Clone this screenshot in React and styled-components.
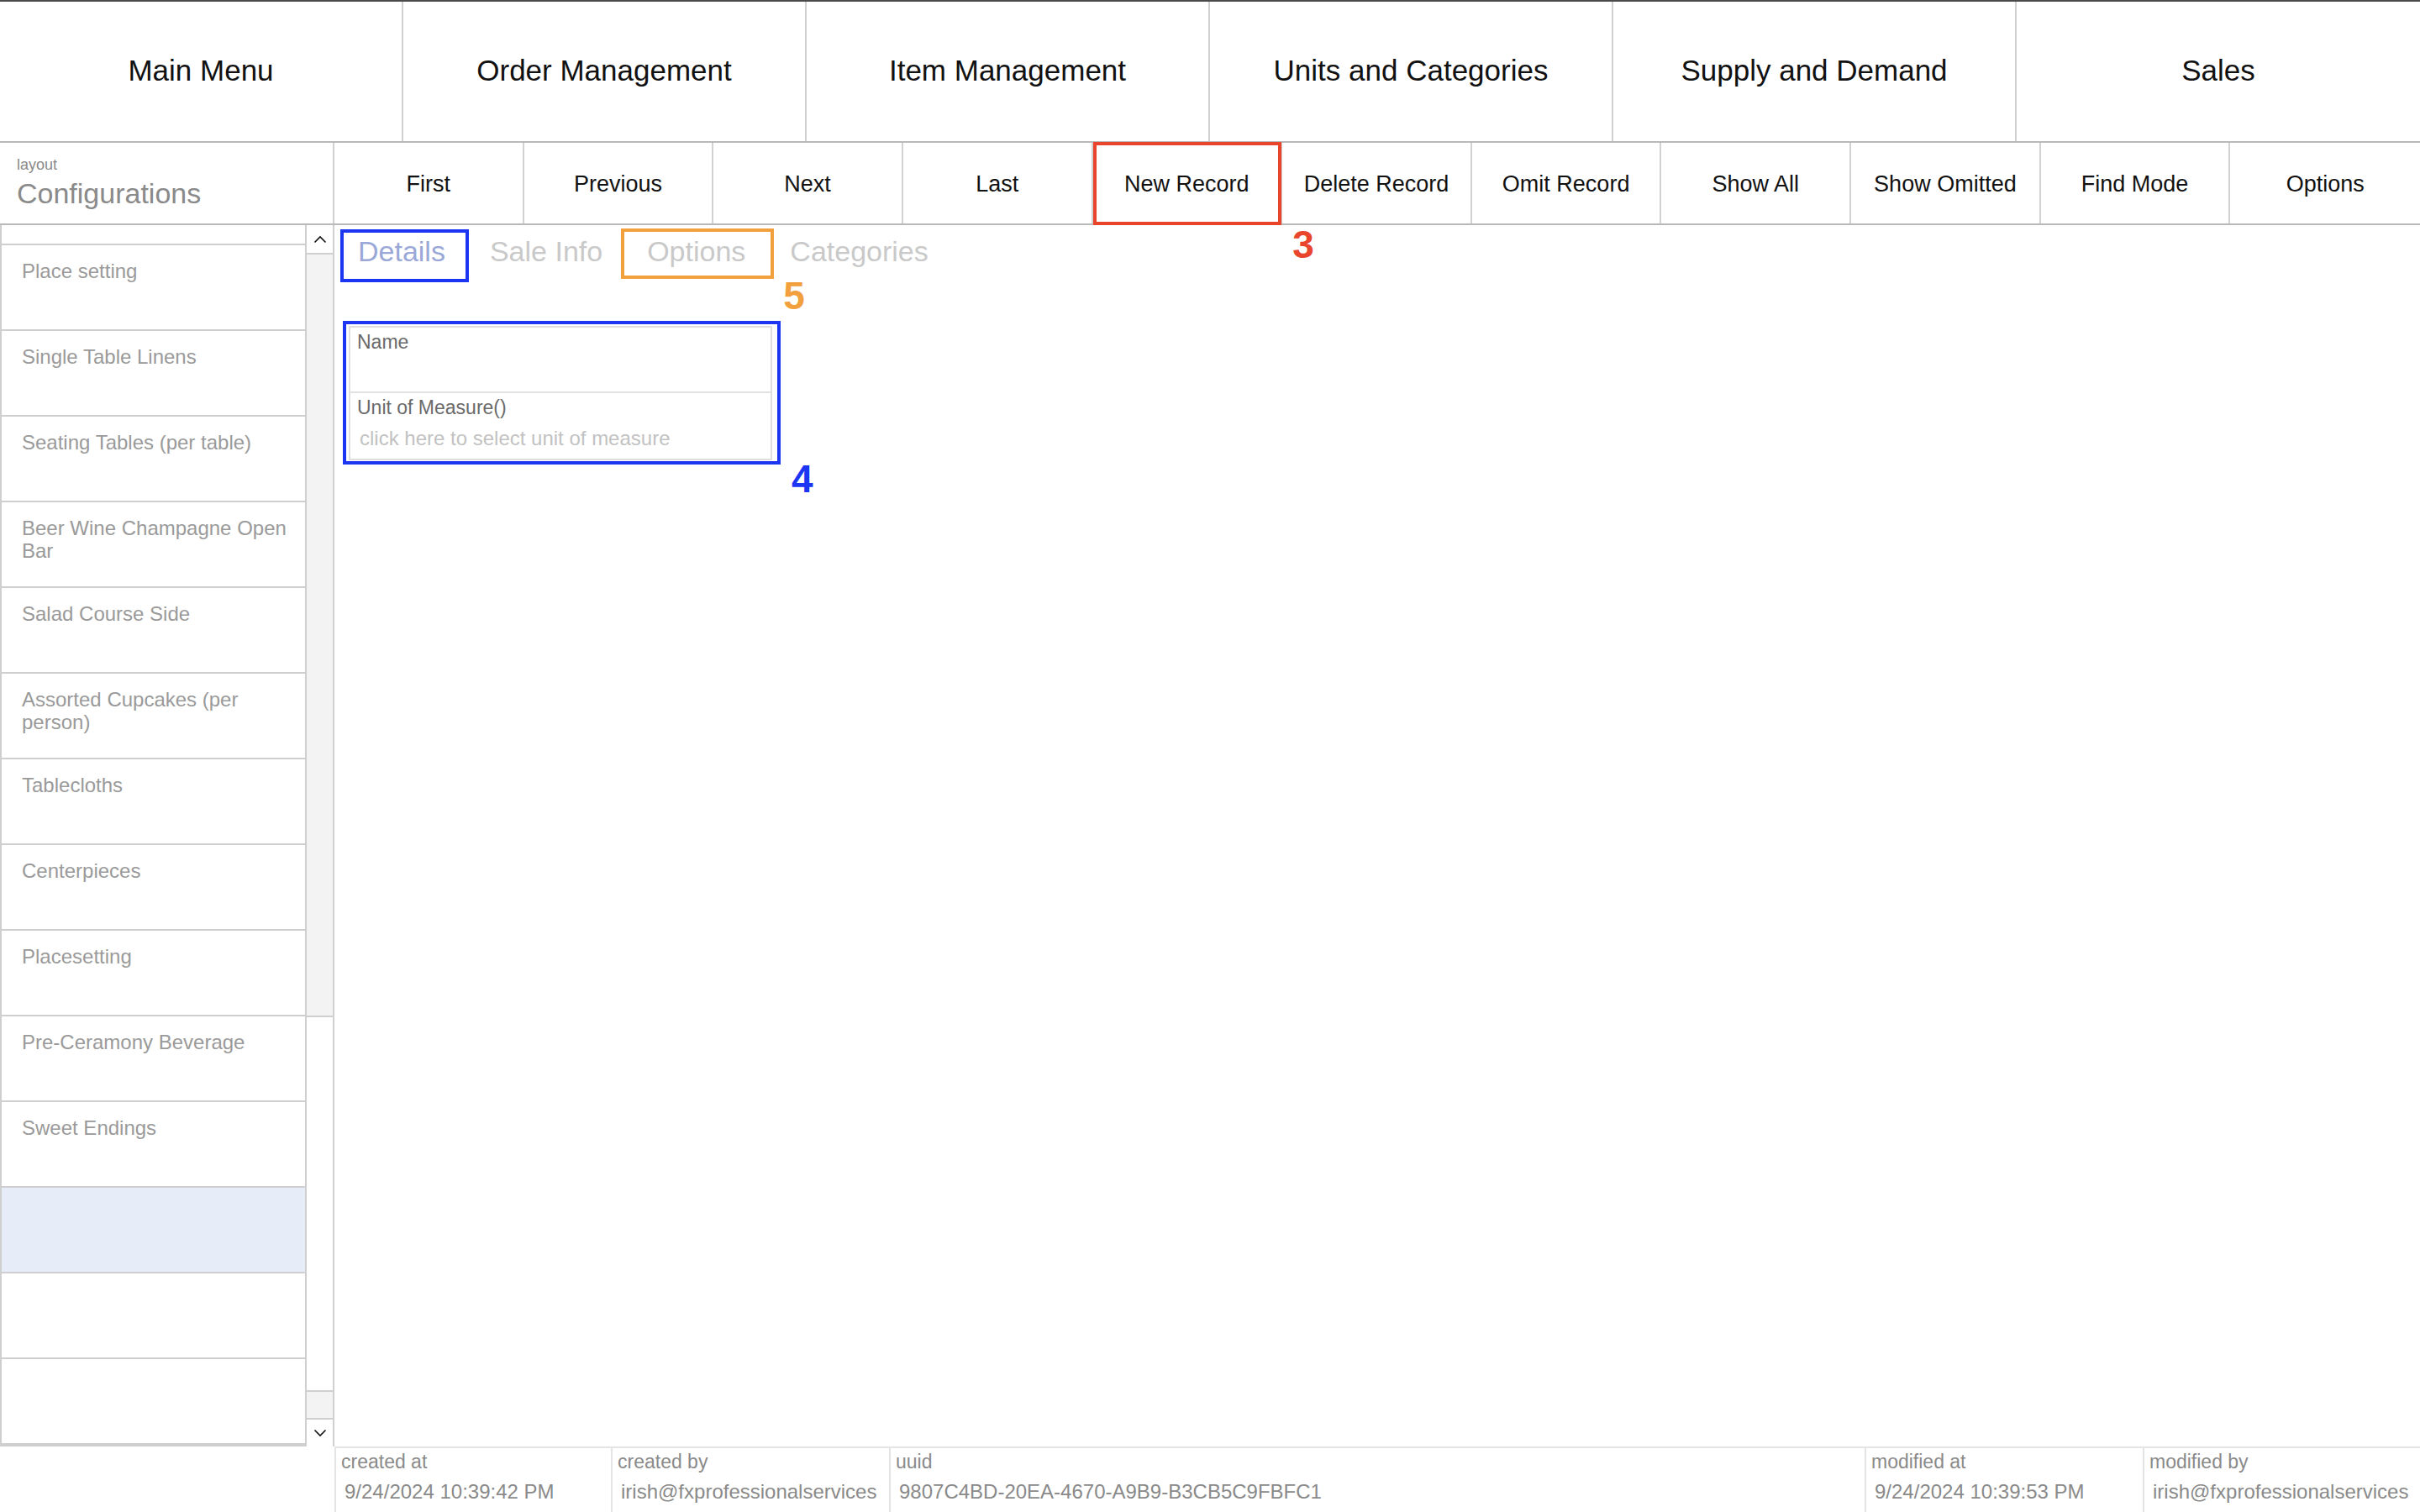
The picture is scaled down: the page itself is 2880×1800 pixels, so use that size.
import React from 'react';
import styled, { createGlobalStyle } from 'styled-components';

const GlobalStyle = createGlobalStyle`
  html, body { margin: 0; padding: 0; background: #fff; }
  body { font-family: "Liberation Sans", Arial, Helvetica, sans-serif; }
  *, *::before, *::after { box-sizing: border-box; }
`;

const Page = styled.div`
  width: 2880px;
  height: 1800px;
  display: flex;
  flex-direction: column;
  overflow: hidden;
  background: #fff;
`;

const NavBar = styled.nav`
  display: grid;
  grid-template-columns: repeat(6, 1fr);
  height: 170px;
  flex: none;
  border-top: 2px solid #4a4a4a;
  border-bottom: 2px solid #b9b9b9;
`;

const NavItem = styled.div`
  display: flex;
  align-items: center;
  justify-content: center;
  padding-bottom: 3px;
  font-size: 35px;
  color: #111;
  border-right: 2px solid #d0d0d0;
  &:last-child { border-right: none; }
`;

const Toolbar = styled.div`
  display: grid;
  grid-template-columns: 398px repeat(11, 1fr);
  height: 98px;
  flex: none;
  border-bottom: 2px solid #b9b9b9;
  position: relative;
  z-index: 3;
`;

const LayoutTitle = styled.div`
  display: flex;
  flex-direction: column;
  padding: 16px 20px 0;
  border-right: 2px solid #d0d0d0;
`;

const LayoutCaption = styled.span`
  font-size: 18px;
  line-height: 20px;
  color: #8a8a8a;
`;

const LayoutName = styled.span`
  font-size: 34px;
  line-height: 38px;
  margin-top: 5px;
  color: #8a8a8a;
`;

const ToolButton = styled.div`
  position: relative;
  display: flex;
  align-items: center;
  justify-content: center;
  padding-top: 3px;
  font-size: 27px;
  color: #111;
  border-right: 2px solid #d2d2d2;
  &:last-child { border-right: none; }
  ${(p) =>
    p.$marked &&
    `
    &::after {
      content: '';
      position: absolute;
      top: -1px;
      bottom: -2px;
      left: 0;
      right: -1px;
      border: 4px solid ${p.$marked};
    }
  `}
`;

const Badge = styled.span`
  position: absolute;
  left: ${(p) => p.$left};
  top: ${(p) => p.$top};
  font-size: 46px;
  font-weight: 700;
  line-height: 1;
  color: ${(p) => p.$color};
  z-index: 6;
  white-space: nowrap;
`;

const Main = styled.div`
  display: flex;
  flex: 1;
  min-height: 0;
`;

const Sidebar = styled.aside`
  width: 398px;
  flex: none;
  display: flex;
  border-right: 2px solid #d0d0d0;
`;

const List = styled.div`
  flex: 1;
  display: flex;
  flex-direction: column;
  border-left: 2px solid #cfcfcf;
  border-bottom: 2px solid #cfcfcf;
  overflow: hidden;
`;

const PartialRow = styled.div`
  height: 24px;
  flex: none;
  border-bottom: 2px solid #cfcfcf;
`;

const Row = styled.div`
  height: 102px;
  flex: none;
  padding: 17px 12px 0 24px;
  font-size: 24px;
  line-height: 27px;
  color: #9a9a9a;
  border-bottom: 2px solid #cfcfcf;
  background: ${(p) => (p.$selected ? '#e6edf8' : '#fff')};
`;

const Scrollbar = styled.div`
  width: 33px;
  flex: none;
  display: flex;
  flex-direction: column;
  border-left: 2px solid #cfcfcf;
`;

const ScrollButton = styled.div`
  height: ${(p) => p.$h}px;
  flex: none;
  display: flex;
  align-items: center;
  justify-content: center;
  border-top: ${(p) => (p.$bottom ? '2px solid #cfcfcf' : 'none')};
  border-bottom: ${(p) => (p.$bottom ? 'none' : '2px solid #cfcfcf')};
`;

const ScrollTrack = styled.div`
  height: ${(p) => p.$h}px;
  flex: none;
  background: #f3f3f3;
  border-top: ${(p) => (p.$edge === 'top' ? '2px solid #cfcfcf' : 'none')};
  border-bottom: ${(p) => (p.$edge === 'bottom' ? '2px solid #cfcfcf' : 'none')};
`;

const ScrollSpace = styled.div`
  flex: 1;
`;

const Content = styled.section`
  flex: 1;
  display: flex;
  flex-direction: column;
  align-items: flex-start;
  padding: 4px 0 0 10px;
  position: relative;
`;

const TabBar = styled.div`
  display: flex;
  gap: 53px;
  height: 54px;
  padding-left: 18px;
`;

const Tab = styled.div`
  position: relative;
  display: flex;
  align-items: center;
  font-size: 34px;
  color: ${(p) => (p.$active ? '#9aa8d8' : '#c9c9c9')};
`;

const TabMarker = styled.span`
  position: absolute;
  top: ${(p) => p.$t}px;
  bottom: ${(p) => p.$b}px;
  left: ${(p) => p.$l}px;
  right: ${(p) => p.$r}px;
  border: 4px solid ${(p) => p.$color};
  pointer-events: none;
`;

const FormCallout = styled.div`
  position: relative;
  margin-top: 56px;
  border: 4px solid #1b35f2;
  padding: 2px 6px 1px 3px;
`;

const FieldBox = styled.div`
  width: 504px;
  display: flex;
  flex-direction: column;
  border: 2px solid #dedede;
`;

const Field = styled.div`
  height: 78px;
  padding: 4px 8px 0 8px;
  display: flex;
  flex-direction: column;
  border-bottom: ${(p) => (p.$last ? 'none' : '2px solid #e2e2e2')};
`;

const FieldLabel = styled.span`
  font-size: 23px;
  line-height: 26px;
  color: #6a6a6a;
`;

const FieldPlaceholder = styled.span`
  font-size: 24px;
  line-height: 26px;
  margin-top: 11px;
  padding-left: 3px;
  color: #c2c2c2;
`;

const Footer = styled.footer`
  display: grid;
  grid-template-columns: 398px 329px 331px 1161px 331px 1fr;
  height: 78px;
  flex: none;
`;

const FooterCell = styled.div`
  padding: 2px 6px 0;
  border-top: 2px solid #e4e4e4;
  border-left: 2px solid #e4e4e4;
  display: flex;
  flex-direction: column;
  white-space: nowrap;
  overflow: hidden;
`;

const FooterBlank = styled.div``;

const FooterLabel = styled.span`
  font-size: 23px;
  line-height: 28px;
  color: #8a8a8a;
`;

const FooterValue = styled.span`
  font-size: 24px;
  line-height: 28px;
  margin-top: 8px;
  padding-left: 4px;
  color: #8a8a8a;
`;

const Chevron = ({ up }) => (
  <svg width="16" height="10" viewBox="0 0 16 10">
    <polyline
      points={up ? '1.5,8.5 8,2 14.5,8.5' : '1.5,1.5 8,8 14.5,1.5'}
      fill="none"
      stroke="#111"
      strokeWidth="1.6"
    />
  </svg>
);

const navItems = ['Main Menu', 'Order Management', 'Item Management', 'Units and Categories', 'Supply and Demand', 'Sales'];
const tools = ['First', 'Previous', 'Next', 'Last', 'New Record', 'Delete Record', 'Omit Record', 'Show All', 'Show Omitted', 'Find Mode', 'Options'];
const rows = [
  'Place setting',
  'Single Table Linens',
  'Seating Tables (per table)',
  'Beer Wine Champagne Open Bar',
  'Salad Course Side',
  'Assorted Cupcakes (per person)',
  'Tablecloths',
  'Centerpieces',
  'Placesetting',
  'Pre-Ceramony Beverage',
  'Sweet Endings',
  '',
  '',
  '',
];
const footer = [
  ['created at', '9/24/2024 10:39:42 PM'],
  ['created by', 'irish@fxprofessionalservices'],
  ['uuid', '9807C4BD-20EA-4670-A9B9-B3CB5C9FBFC1'],
  ['modified at', '9/24/2024 10:39:53 PM'],
  ['modified by', 'irish@fxprofessionalservices'],
];

export default function App() {
  return (
    <Page>
      <GlobalStyle />
      <NavBar>
        {navItems.map((n) => (
          <NavItem key={n}>{n}</NavItem>
        ))}
      </NavBar>
      <Toolbar>
        <LayoutTitle>
          <LayoutCaption>layout</LayoutCaption>
          <LayoutName>Configurations</LayoutName>
        </LayoutTitle>
        {tools.map((t) => (
          <ToolButton key={t} $marked={t === 'New Record' ? '#e8452c' : undefined}>
            {t}
            {t === 'New Record' && (
              <Badge $color="#e8452c" $left="calc(100% + 14px)" $top="calc(100% + 2px)">
                3
              </Badge>
            )}
          </ToolButton>
        ))}
      </Toolbar>
      <Main>
        <Sidebar>
          <List>
            <PartialRow />
            {rows.map((r, i) => (
              <Row key={i} $selected={i === 11}>
                {r}
              </Row>
            ))}
          </List>
          <Scrollbar>
            <ScrollButton $h={35}>
              <Chevron up />
            </ScrollButton>
            <ScrollTrack $h={908} $edge="bottom" />
            <ScrollSpace />
            <ScrollTrack $h={33} $edge="top" />
            <ScrollButton $h={34} $bottom>
              <Chevron />
            </ScrollButton>
          </Scrollbar>
        </Sidebar>
        <Content>
          <TabBar>
            <Tab $active>
              Details
              <TabMarker $color="#1b35f2" $t={1} $b={-10} $l={-21} $r={-28} />
            </Tab>
            <Tab>Sale Info</Tab>
            <Tab>
              Options
              <TabMarker $color="#f2a03d" $t={0} $b={-6} $l={-31} $r={-34}>
                <Badge $color="#f2a03d" $left="calc(100% + 15px)" $top="calc(100% + 1px)">
                  5
                </Badge>
              </TabMarker>
            </Tab>
            <Tab>Categories</Tab>
          </TabBar>
          <FormCallout>
            <FieldBox>
              <Field>
                <FieldLabel>Name</FieldLabel>
              </Field>
              <Field $last>
                <FieldLabel>Unit of Measure()</FieldLabel>
                <FieldPlaceholder>click here to select unit of measure</FieldPlaceholder>
              </Field>
            </FieldBox>
            <Badge $color="#1b35f2" $left="calc(100% + 17px)" $top="calc(100% - 2px)">
              4
            </Badge>
          </FormCallout>
        </Content>
      </Main>
      <Footer>
        <FooterBlank />
        {footer.map(([l, v]) => (
          <FooterCell key={l}>
            <FooterLabel>{l}</FooterLabel>
            <FooterValue>{v}</FooterValue>
          </FooterCell>
        ))}
      </Footer>
    </Page>
  );
}
